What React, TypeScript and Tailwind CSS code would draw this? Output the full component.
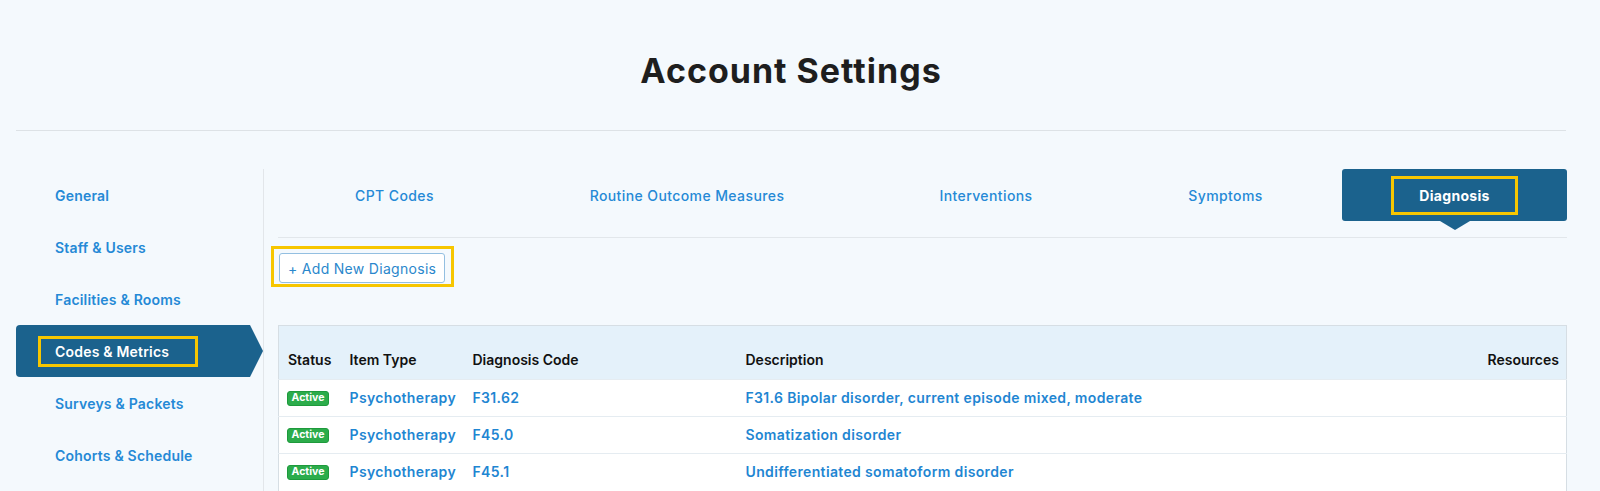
import React from 'react';

const NAV_ITEMS = [
  'General',
  'Staff & Users',
  'Facilities & Rooms',
  'Codes & Metrics',
  'Surveys & Packets',
  'Cohorts & Schedule',
];

const TABS = [
  { label: 'CPT Codes', width: 'w-[233px]' },
  { label: 'Routine Outcome Measures', width: 'w-[352px]' },
  { label: 'Interventions', width: 'w-[246px]' },
  { label: 'Symptoms', width: 'w-[233px]' },
  { label: 'Diagnosis', width: 'w-[225px]' },
];

const ROWS = [
  { type: 'Psychotherapy', code: 'F31.62', desc: 'F31.6 Bipolar disorder, current episode mixed, moderate' },
  { type: 'Psychotherapy', code: 'F45.0', desc: 'Somatization disorder' },
  { type: 'Psychotherapy', code: 'F45.1', desc: 'Undifferentiated somatoform disorder' },
];

const Sidebar = () => (
  <aside className="w-[247px] shrink-0">
    <ul>
      {NAV_ITEMS.map((item) =>
        item === 'Codes & Metrics' ? (
          <li
            key={item}
            className="flex h-[52px] items-center rounded-l-[4px] bg-[#1b628d] [clip-path:polygon(0_0,234px_0,247px_50%,234px_100%,0_100%)]"
          >
            <span className="ml-[22px] flex h-[31px] w-[160px] items-center border-[3px] border-[#f7c600] pl-[14px] text-[14px] font-semibold tracking-[0.2px] text-white">
              {item}
            </span>
          </li>
        ) : (
          <li key={item} className="flex h-[52px] items-center pl-[39px]">
            <a href="#" className="text-[14px] font-semibold tracking-[0.2px] text-[#2589d6]">
              {item}
            </a>
          </li>
        )
      )}
    </ul>
  </aside>
);

const Tabs = () => (
  <div className="flex border-b border-[#e2e7eb] pb-4">
    {TABS.map((tab) =>
      tab.label === 'Diagnosis' ? (
        <div
          key={tab.label}
          className={`relative flex h-[52px] items-center justify-center rounded-[3px] bg-[#1b628d] ${tab.width}`}
        >
          <span className="flex h-[39px] w-[127px] items-center justify-center border-[3px] border-[#f7c600] text-[14px] font-bold tracking-[0.3px] text-white">
            {tab.label}
          </span>
          <span className="absolute left-1/2 top-full -translate-x-1/2 border-x-[15px] border-t-[9px] border-x-transparent border-t-[#1b628d]" />
        </div>
      ) : (
        <div key={tab.label} className={`flex h-[52px] items-center justify-center ${tab.width}`}>
          <a href="#" className="whitespace-nowrap text-[14px] font-medium tracking-[0.4px] text-[#2589d6]">
            {tab.label}
          </a>
        </div>
      )
    )}
  </div>
);

const DiagnosisTable = () => (
  <table className="mt-[38px] w-full table-fixed border-collapse border border-b-0 border-[#d6dee4] text-[14px]">
    <colgroup>
      <col className="w-[61px]" />
      <col className="w-[123px]" />
      <col className="w-[273px]" />
      <col />
      <col className="w-[120px]" />
    </colgroup>
    <thead>
      <tr className="h-[54px] bg-[#e4f1fa] text-left text-[#111]">
        <th className="pb-[9px] pl-[9px] align-bottom font-semibold">Status</th>
        <th className="pb-[9px] pl-[10px] align-bottom font-semibold">Item Type</th>
        <th className="pb-[9px] pl-[10px] align-bottom font-semibold">Diagnosis Code</th>
        <th className="pb-[9px] pl-[10px] align-bottom font-semibold">Description</th>
        <th className="pb-[9px] pr-[7px] text-right align-bottom font-semibold">Resources</th>
      </tr>
    </thead>
    <tbody>
      {ROWS.map((row) => (
        <tr
          key={row.code}
          className="h-[37px] border-t border-[#e5ecf1] bg-white font-semibold tracking-[0.35px] text-[#1f86d2]"
        >
          <td className="pl-[8px]">
            <span className="flex h-[15px] w-[42px] items-center justify-center rounded-[3px] border border-[#1e9a3c] bg-[#2cac4b] text-[10.5px] font-bold tracking-normal text-white">
              Active
            </span>
          </td>
          <td className="whitespace-nowrap pb-[2px] pl-[10px]">{row.type}</td>
          <td className="pb-[2px] pl-[10px]">{row.code}</td>
          <td className="whitespace-nowrap pb-[2px] pl-[10px]">{row.desc}</td>
          <td />
        </tr>
      ))}
    </tbody>
  </table>
);

export default function App() {
  return (
    <div className="min-h-screen bg-[#f4f9fd] pl-4 pr-[34px] font-['Inter',sans-serif]">
      <h1 className="pt-[50px] text-center text-[34px] font-bold leading-[41px] tracking-[1px] text-[#1e1e1e]">
        Account Settings
      </h1>
      <div className="mt-[39px] border-t border-[#dde2e6]" />

      <div className="mt-[38px] flex">
        <Sidebar />
        <div className="w-px shrink-0 bg-[#e2e6ea]" />
        <main className="flex-1 pl-[14px]">
          <Tabs />
          <div className="-ml-[7px] mt-2 inline-flex border-[3px] border-[#f7c600] pb-px pl-[5px] pr-[6px] pt-1">
            <button className="h-[30px] rounded-[3px] border border-[#93bfe1] bg-white px-[8px] text-[14px] tracking-[0.3px] text-[#2a87cc]">
              + Add New Diagnosis
            </button>
          </div>
          <DiagnosisTable />
        </main>
      </div>
    </div>
  );
}
